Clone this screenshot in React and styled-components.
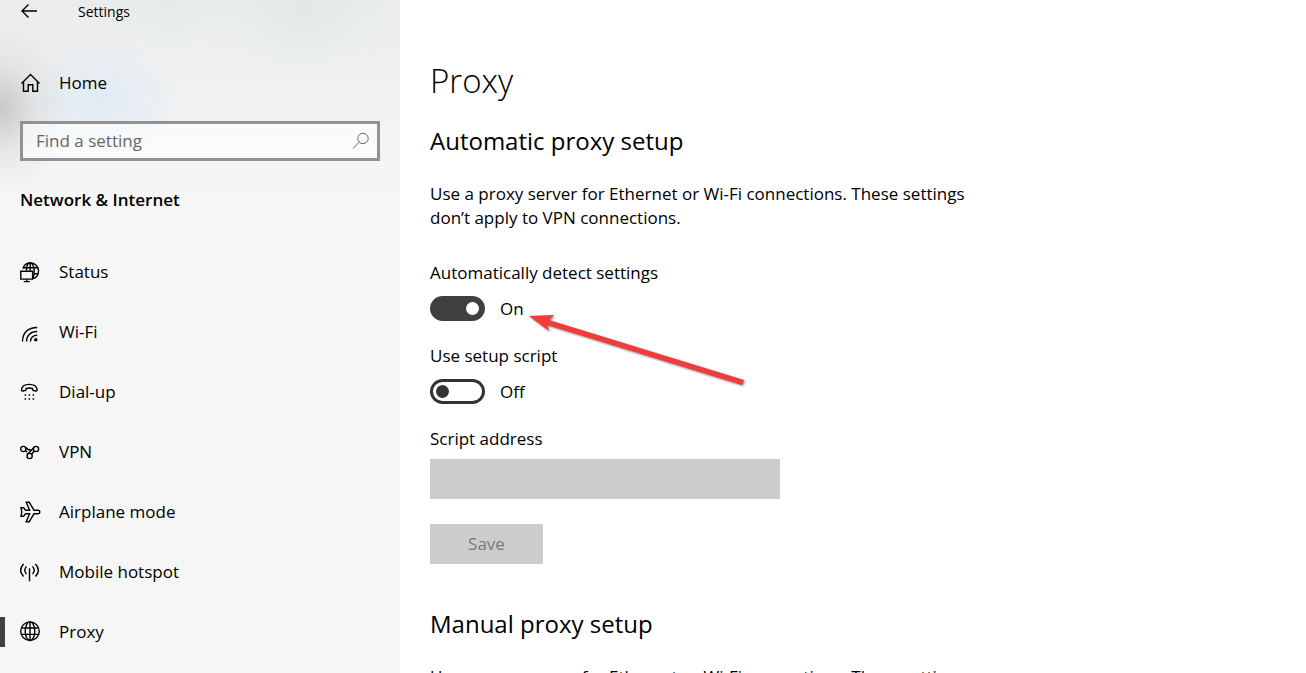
import React, { useState } from 'react'
import styled, { createGlobalStyle } from 'styled-components'

const navItems = [
    { name: 'Status', icon: 'status' },
    { name: 'Wi-Fi', icon: 'wifi' },
    { name: 'Dial-up', icon: 'dialup' },
    { name: 'VPN', icon: 'vpn' },
    { name: 'Airplane mode', icon: 'airplane' },
    { name: 'Mobile hotspot', icon: 'hotspot' },
    { name: 'Proxy', icon: 'proxy' },
]

const shapes = {
    back: <path d="M9.5 3.5 3 10l6.5 6.5M3 10h15" />,
    home: <path d="M1.5 11.5 10.5 2.5l9 9M3.5 10v9.3h4.7v-6.5h4.6v6.5h4.7V10" />,
    search: (
        <>
            <circle cx="13" cy="8.5" r="5.2" />
            <path d="M9.3 12.2 3 18.5" />
        </>
    ),
    status: (
        <>
            <path d="M3 7.8C4 4.2 6.6 1.8 10.2 1.8c4.8 0 8.3 3.6 8.3 8.2 0 3.8-2.2 6.7-5.4 7.6M3.2 6.8h14M14 12.8h4M6.4 9.5C6.6 5 8.2 1.8 10.2 1.8s4 3.4 4 8c0 3-.4 5.4-1.2 7.2M10.2 1.8v8" />
            <path fill="#f6f6f6" d="M.8 10.2h11.8v7.9H.8zM6.7 18v2.6M3.7 20.6h6" />
        </>
    ),
    wifi: (
        <>
            <path d="M2.5 20.5c0-8.4 5.4-14 14.7-14M6.5 20.5c0-6.2 4.2-10 10.7-10M10.5 20.5c0-3.9 2.5-6.3 6.7-6.3" />
            <circle cx="15.8" cy="18.8" r="1.8" fill="currentColor" stroke="none" />
        </>
    ),
    dialup: (
        <>
            <path d="M1.5 8.8C1.7 5.4 5 3.4 9.3 3.4s7.6 2 7.8 5.4c0 1-.5 1.4-1.3 1.2l-2.3-.5c-.7-.1-1-.5-1-1.1V7.5c-2-.6-4.4-.6-6.4 0v.9c0 .6-.3 1-1 1.1l-2.3.5c-.8.2-1.3-.2-1.3-1.2z" />
            <path strokeDasharray="1.5 2.5" d="M4.6 14h10M4.6 18h10" />
        </>
    ),
    vpn: (
        <>
            <circle cx="3.3" cy="8" r="2.6" />
            <circle cx="16" cy="8" r="2.6" />
            <circle cx="9.6" cy="15" r="2.6" />
            <path d="M5.3 6.3 8 8.4c.8.6 1.6.6 2.4-.2M5.4 9.8l1.8 1.3M7.6 13.2l6.5-7M11.5 13.2l2.6-3" />
        </>
    ),
    airplane: <path d="M1 6.8h2.6L5.6 9.2h4L6.2 1.3h3L14 9.2h4a1.8 1.8 0 0 1 0 3.6h-4l-4.8 7.9h-3l3.4-7.9h-4l-2 2.4H1L1.8 11z" />,
    hotspot: (
        <path d="M3.6 3c-3.8 4-3.8 8.6 0 12.4M6.5 5.4c-2.2 2.4-2.2 5.2 0 7.6M15.4 3c3.8 4 3.8 8.6 0 12.4M12.5 5.4c2.2 2.4 2.2 5.2 0 7.6M9.5 7.3v12.9" />
    ),
    proxy: (
        <>
            <circle cx="10" cy="10.2" r="9.3" />
            <ellipse cx="10" cy="10.2" rx="4.8" ry="9.3" />
            <path d="M10 1v18.5M1.7 7h16.6M1.7 13.4h16.6" />
        </>
    ),
}

const Icon = ({ name, thin }) => (
    <IconSvg viewBox="0 0 22 22" $thin={thin} aria-hidden="true">{shapes[name]}</IconSvg>
)

const ToggleField = ({ id, label, checked, onChange }) => (
    <Field>
        <FieldLabel htmlFor={id}>{label}</FieldLabel>
        <ToggleRow>
            <Toggle id={id} type="checkbox" role="switch" checked={checked} onChange={onChange} />
            <span>{checked ? 'On' : 'Off'}</span>
        </ToggleRow>
    </Field>
)

const App = () => {
    const [detect, setDetect] = useState(true)
    const [script, setScript] = useState(false)

    return (
        <Page>
            <GlobalStyle />
            <Sidebar>
                <TitleBar>
                    <BackButton aria-label="Back"><Icon name="back" /></BackButton>
                    <span>Settings</span>
                </TitleBar>
                <NavLink href="#home"><Icon name="home" />Home</NavLink>
                <SearchBox>
                    <SearchInput type="search" aria-label="Find a setting" placeholder="Find a setting" />
                    <Icon name="search" thin />
                </SearchBox>
                <Category>Network &amp; Internet</Category>
                <nav>
                    {navItems.map(item => (
                        <NavLink key={item.name} href={`#${item.icon}`} $active={item.icon === 'proxy'}>
                            <Icon name={item.icon} />
                            {item.name}
                        </NavLink>
                    ))}
                </nav>
            </Sidebar>
            <Content>
                <Title>Proxy</Title>
                <Section>
                    <SectionTitle>Automatic proxy setup</SectionTitle>
                    <Description>
                        Use a proxy server for Ethernet or Wi-Fi connections. These settings don’t apply to VPN connections.
                    </Description>
                    <ToggleField
                        id="detect"
                        label="Automatically detect settings"
                        checked={detect}
                        onChange={() => setDetect(!detect)}
                    />
                    <ToggleField
                        id="script"
                        label="Use setup script"
                        checked={script}
                        onChange={() => setScript(!script)}
                    />
                    <FieldLabel htmlFor="address">Script address</FieldLabel>
                    <AddressInput id="address" type="text" disabled={!script} />
                    <SaveButton disabled={!script}>Save</SaveButton>
                </Section>
                <Section>
                    <SectionTitle>Manual proxy setup</SectionTitle>
                    <Description>
                        Use a proxy server for Ethernet or Wi-Fi connections. These settings don’t apply to VPN connections.
                    </Description>
                </Section>
                <Arrow viewBox="0 0 220 76" aria-hidden="true">
                    <path d="M2 5 27 4 22 9 217 69 215 74 20 14 22 20z" />
                </Arrow>
            </Content>
        </Page>
    )
}

const GlobalStyle = createGlobalStyle`
* {
    box-sizing: border-box;
}
body {
    margin: 0;
    background: #fff;
    color: #000;
    font-family: "Open Sans", "Noto Sans", sans-serif;
    font-size: 17px;
    line-height: 24px;
}
input, button {
    font: inherit;
}
`

const Page = styled.div`
display: flex;
height: 100vh;
overflow: hidden;
`

const Sidebar = styled.aside`
flex: 0 0 400px;
background:
    radial-gradient(ellipse 75px 85px at 0 108px, rgba(185, 185, 185, 0.75), rgba(200, 200, 200, 0.3) 50%, transparent),
    radial-gradient(ellipse 80px 60px at 100px 102px, rgba(216, 232, 246, 0.7), transparent),
    radial-gradient(ellipse 90px 60px at 305px 12px, rgba(215, 232, 222, 0.5), transparent),
    radial-gradient(ellipse 90px 50px at 170px 0, rgba(220, 235, 228, 0.5), transparent),
    linear-gradient(#ebeced, #f0f1f1 90px, #f6f6f6 200px);
`

const TitleBar = styled.div`
display: flex;
align-items: center;
gap: 37px;
height: 24px;
margin-bottom: 29px;
padding-left: 19px;
font-size: 14px;
`

const BackButton = styled.button`
display: flex;
padding: 0;
border: 0;
background: none;
color: inherit;
`

const IconSvg = styled.svg`
flex: none;
width: 22px;
height: 22px;
fill: none;
stroke: currentColor;
stroke-width: ${props => (props.$thin ? 1 : 1.4)};
`

const NavLink = styled.a`
display: flex;
align-items: center;
gap: 17px;
height: 60px;
padding-left: 20px;
color: inherit;
text-decoration: none;
background: ${props => (props.$active ? 'linear-gradient(#404040, #404040) 0 center / 5px 30px no-repeat' : 'none')};
`

const SearchBox = styled.div`
display: flex;
align-items: center;
height: 40px;
margin: 8px 20px 27px;
padding: 0 5px 0 13px;
border: 3px solid #929292;
background: rgba(255, 255, 255, 0.6);
color: #666;
`

const SearchInput = styled.input`
flex: 1;
min-width: 0;
padding: 0;
border: 0;
outline: 0;
background: none;
&::placeholder {
    color: #666;
    opacity: 1;
}
`

const Category = styled.h2`
margin: 0 20px 30px;
font-size: 17px;
font-weight: 600;
`

const Content = styled.main`
position: relative;
flex: 1;
min-width: 0;
padding: 57px 30px 0;
`

const Title = styled.h1`
margin: 0 0 20px;
font-size: 33px;
font-weight: 300;
line-height: 48px;
`

const Section = styled.section`
max-width: 550px;
margin-bottom: 44px;
`

const SectionTitle = styled.h2`
margin: 0 0 25px;
font-size: 24px;
font-weight: 400;
line-height: 32px;
`

const Description = styled.p`
margin: 0 0 31px;
`

const Field = styled.div`
margin-bottom: 23px;
`

const FieldLabel = styled.label`
display: block;
`

const ToggleRow = styled.div`
display: flex;
align-items: center;
gap: 15px;
margin-top: 11px;
`

const Toggle = styled.input`
display: flex;
align-items: center;
width: 55px;
height: 25px;
margin: 0;
padding: 0 3px;
border: 3px solid #333;
border-radius: 13px;
appearance: none;
background: #fff;
&::before {
    content: '';
    width: 13px;
    height: 13px;
    border-radius: 50%;
    background: #333;
}
&:checked {
    justify-content: flex-end;
    border-color: #404040;
    background: #404040;
}
&:checked::before {
    background: #fff;
}
`

const AddressInput = styled.input`
display: block;
width: 350px;
max-width: 100%;
height: 40px;
margin: 8px 0 25px;
padding: 0 12px;
border: 0;
background: #ccc;
`

const SaveButton = styled.button`
display: block;
width: 113px;
height: 40px;
border: 0;
background: #ccc;
color: #7a7a7a;
`

const Arrow = styled.svg`
position: absolute;
top: 311px;
left: 127px;
width: 220px;
height: 76px;
fill: #f23b3b;
pointer-events: none;
filter: drop-shadow(1px 1px 1px rgba(0, 0, 0, 0.5));
`

export default App
